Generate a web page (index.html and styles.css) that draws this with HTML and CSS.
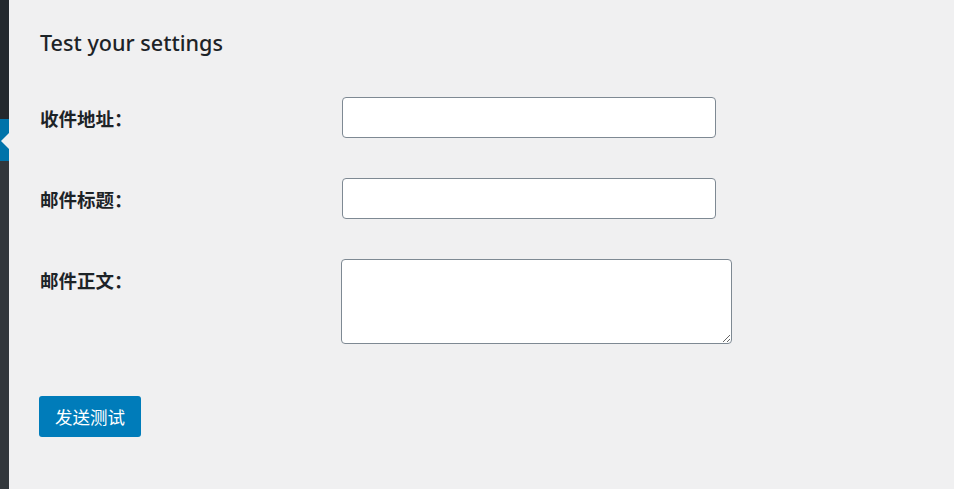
FILE: index.html
```html
<!DOCTYPE html>
<html lang="zh-CN">
<head>
  <meta charset="UTF-8">
  <title>Test your settings</title>
  <link rel="stylesheet" href="styles.css">
</head>
<body>

<div class="sidebar">
  <div class="menu-top"></div>
  <div class="menu-current"></div>
  <div class="menu-rest"></div>
</div>

<div class="wrap">
  <h2>Test your settings</h2>

  <form class="test-form" onsubmit="return false;">
    <div class="row">
      <label for="to">收件地址：</label>
      <input type="text" id="to" class="field">
    </div>
    <div class="row">
      <label for="subject">邮件标题：</label>
      <input type="text" id="subject" class="field">
    </div>
    <div class="row">
      <label for="body">邮件正文：</label>
      <textarea id="body" class="field-area"></textarea>
    </div>
    <button type="submit" class="btn-primary">发送测试</button>
  </form>
</div>

</body>
</html>
```

FILE: styles.css
```css
html, body {
  height: 100%;
}
body {
  margin: 0;
  display: flex;
  background: #f0f0f1;
  font-family: "Noto Sans", "Noto Sans CJK SC", sans-serif;
  color: #1d2327;
}
.sidebar {
  width: 9px;
  flex-shrink: 0;
  display: flex;
  flex-direction: column;
  background: #32373c;
}
.menu-top {
  height: 119px;
  background: #23282d;
}
.menu-current {
  height: 42px;
  background: #0073aa;
  position: relative;
}
.menu-current::after {
  content: "";
  position: absolute;
  right: 0;
  top: 14px;
  border-style: solid;
  border-width: 8px 8px 8px 0;
  border-color: transparent #f0f0f1 transparent transparent;
}
.menu-rest {
  flex: 1;
}
.wrap {
  padding: 29px 0 0 31px;
}
h2 {
  margin: 0 0 40px;
  font-size: 21.6px;
  line-height: 28px;
  font-weight: 500;
}
.row {
  display: flex;
  align-items: flex-start;
  margin-bottom: 40px;
}
.row label {
  width: 302px;
  flex-shrink: 0;
  padding-top: 9px;
  font-family: "Noto Sans CJK SC", sans-serif;
  font-size: 18.5px;
  line-height: 24px;
  font-weight: bold;
  color: #1d2327;
}
.field {
  box-sizing: border-box;
  width: 374px;
  height: 41px;
  margin: 0;
  border: 1px solid #7e8993;
  border-radius: 4px;
  background: #fff;
  font-size: 17px;
  padding: 0 10px;
}
.field-area {
  box-sizing: border-box;
  width: 391px;
  height: 85px;
  margin: 0 0 0 -1px;
  border: 1px solid #7e8993;
  border-radius: 4px;
  background: #fff;
  font-size: 17px;
}
.row:nth-child(3) {
  margin-bottom: 52px;
}
.btn-primary {
  margin-left: -1px;
  width: 102px;
  height: 41px;
  border: 0;
  border-radius: 3px;
  background: #007cba;
  color: #fff;
  font-family: "Noto Sans CJK SC", sans-serif;
  font-size: 17.5px;
  cursor: pointer;
}
```
